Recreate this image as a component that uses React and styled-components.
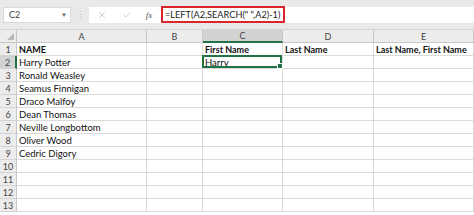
import React from "react";
import styled, { createGlobalStyle } from "styled-components";
import { X, Check } from "lucide-react";

const GlobalStyle = createGlobalStyle`
  body {
    margin: 0;
    background: #ffffff;
    font-family: Lato, "Open Sans", sans-serif;
  }
`;

const Wrapper = styled.div`
  width: 474px;
  height: 215px;
  overflow: hidden;
  background: #ffffff;
`;

const FormulaBar = styled.div`
  height: 30px;
  background: #e9e9e9;
  display: flex;
  align-items: center;
  padding: 0 0 0 3px;
  box-sizing: border-box;
  border-bottom: 1px solid #d4d4d4;
`;

const NameBox = styled.div`
  width: 68px;
  height: 16px;
  background: #ffffff;
  border: 1px solid #dadada;
  display: flex;
  align-items: center;
  justify-content: space-between;
  padding: 0 3px 0 5px;
  box-sizing: border-box;
  font-size: 9px;
  color: #444;
`;

const Arrow = styled.span`
  font-size: 6px;
  color: #666;
`;

const Dots = styled.span`
  width: 18px;
  text-align: center;
  color: #b4b4b4;
  font-size: 9px;
`;

const FormulaArea = styled.div`
  flex: 1;
  height: 16px;
  background: #ffffff;
  display: flex;
  align-items: center;
`;

const IconSlot = styled.span`
  width: ${(p) => p.$w}px;
  display: flex;
  justify-content: center;
  align-items: center;
  color: #b0b0b0;
`;

const Fx = styled.span`
  font-family: "Liberation Serif", serif;
  font-style: italic;
  font-size: 9px;
  color: #555;
`;

const FormulaInput = styled.div`
  height: 13px;
  border: 2px solid #d9252b;
  box-sizing: content-box;
  margin-left: 2px;
  padding: 0 3px 0 2px;
  display: flex;
  align-items: center;
  font-size: 9.2px;
  color: #222;
  white-space: nowrap;
`;

const Grid = styled.div`
  display: grid;
  grid-template-columns: 17px 130px 56px 80px 91px 100px;
  grid-auto-rows: 13px;
`;

const ColHead = styled.div`
  background: ${(p) => (p.$active ? "#d2d2d2" : "#ececec")};
  border-right: 1px solid #c8c8c8;
  border-bottom: ${(p) => (p.$active ? "2px solid #217346" : "1px solid #c8c8c8")};
  display: flex;
  align-items: center;
  justify-content: center;
  font-size: 9px;
  color: #444;
  box-sizing: border-box;
  position: relative;
`;

const Corner = styled.span`
  position: absolute;
  right: 2px;
  bottom: 2px;
  width: 0;
  height: 0;
  border-left: 7px solid transparent;
  border-bottom: 7px solid #b9b9b9;
`;

const RowHead = styled.div`
  background: ${(p) => (p.$active ? "#d2d2d2" : "#ececec")};
  border-right: ${(p) => (p.$active ? "2px solid #217346" : "1px solid #c8c8c8")};
  border-bottom: 1px solid #d4d4d4;
  display: flex;
  align-items: center;
  justify-content: center;
  font-size: 9px;
  color: #444;
  box-sizing: border-box;
`;

const Cell = styled.div`
  border-right: 1px solid #dadada;
  border-bottom: 1px solid #dadada;
  box-sizing: border-box;
  display: flex;
  align-items: center;
  padding-left: 2px;
  font-size: ${(p) => (p.$bold ? "9px" : "9.5px")};
  font-weight: ${(p) => (p.$bold ? 700 : 400)};
  color: #111;
  white-space: nowrap;
  position: relative;
`;

const Selection = styled.span`
  position: absolute;
  left: -1px;
  top: -1px;
  right: 0;
  bottom: 0;
  border: 2px solid #217346;
  pointer-events: none;
`;

const Handle = styled.span`
  position: absolute;
  right: -3px;
  bottom: -3px;
  width: 4px;
  height: 4px;
  background: #217346;
  border: 1px solid #ffffff;
`;

const cols = ["A", "B", "C", "D", "E"];

const rows = [
  ["NAME", "", "First Name", "Last Name", "Last Name, First Name"],
  ["Harry Potter", "", "Harry", "", ""],
  ["Ronald Weasley", "", "", "", ""],
  ["Seamus Finnigan", "", "", "", ""],
  ["Draco Malfoy", "", "", "", ""],
  ["Dean Thomas", "", "", "", ""],
  ["Neville Longbottom", "", "", "", ""],
  ["Oliver Wood", "", "", "", ""],
  ["Cedric Digory", "", "", "", ""],
  ["", "", "", "", ""],
  ["", "", "", "", ""],
  ["", "", "", "", ""],
  ["", "", "", "", ""],
];

export default function App() {
  return (
    <Wrapper>
      <GlobalStyle />
      <FormulaBar>
        <NameBox>
          C2
          <Arrow>▼</Arrow>
        </NameBox>
        <Dots>⋮</Dots>
        <FormulaArea>
          <IconSlot $w={26}>
            <X size={10} strokeWidth={1.5} />
          </IconSlot>
          <IconSlot $w={24}>
            <Check size={10} strokeWidth={1.5} />
          </IconSlot>
          <IconSlot $w={20}>
            <Fx>fx</Fx>
          </IconSlot>
          <FormulaInput>=LEFT(A2,SEARCH(" ",A2)-1)</FormulaInput>
        </FormulaArea>
      </FormulaBar>
      <Grid>
        <ColHead>
          <Corner />
        </ColHead>
        {cols.map((c) => (
          <ColHead key={c} $active={c === "C"}>
            {c}
          </ColHead>
        ))}
        {rows.map((r, i) => (
          <React.Fragment key={i}>
            <RowHead $active={i === 1}>{i + 1}</RowHead>
            {r.map((v, j) => (
              <Cell key={j} $bold={i === 0}>
                {v}
                {i === 1 && j === 2 && (
                  <Selection>
                    <Handle />
                  </Selection>
                )}
              </Cell>
            ))}
          </React.Fragment>
        ))}
      </Grid>
    </Wrapper>
  );
}
